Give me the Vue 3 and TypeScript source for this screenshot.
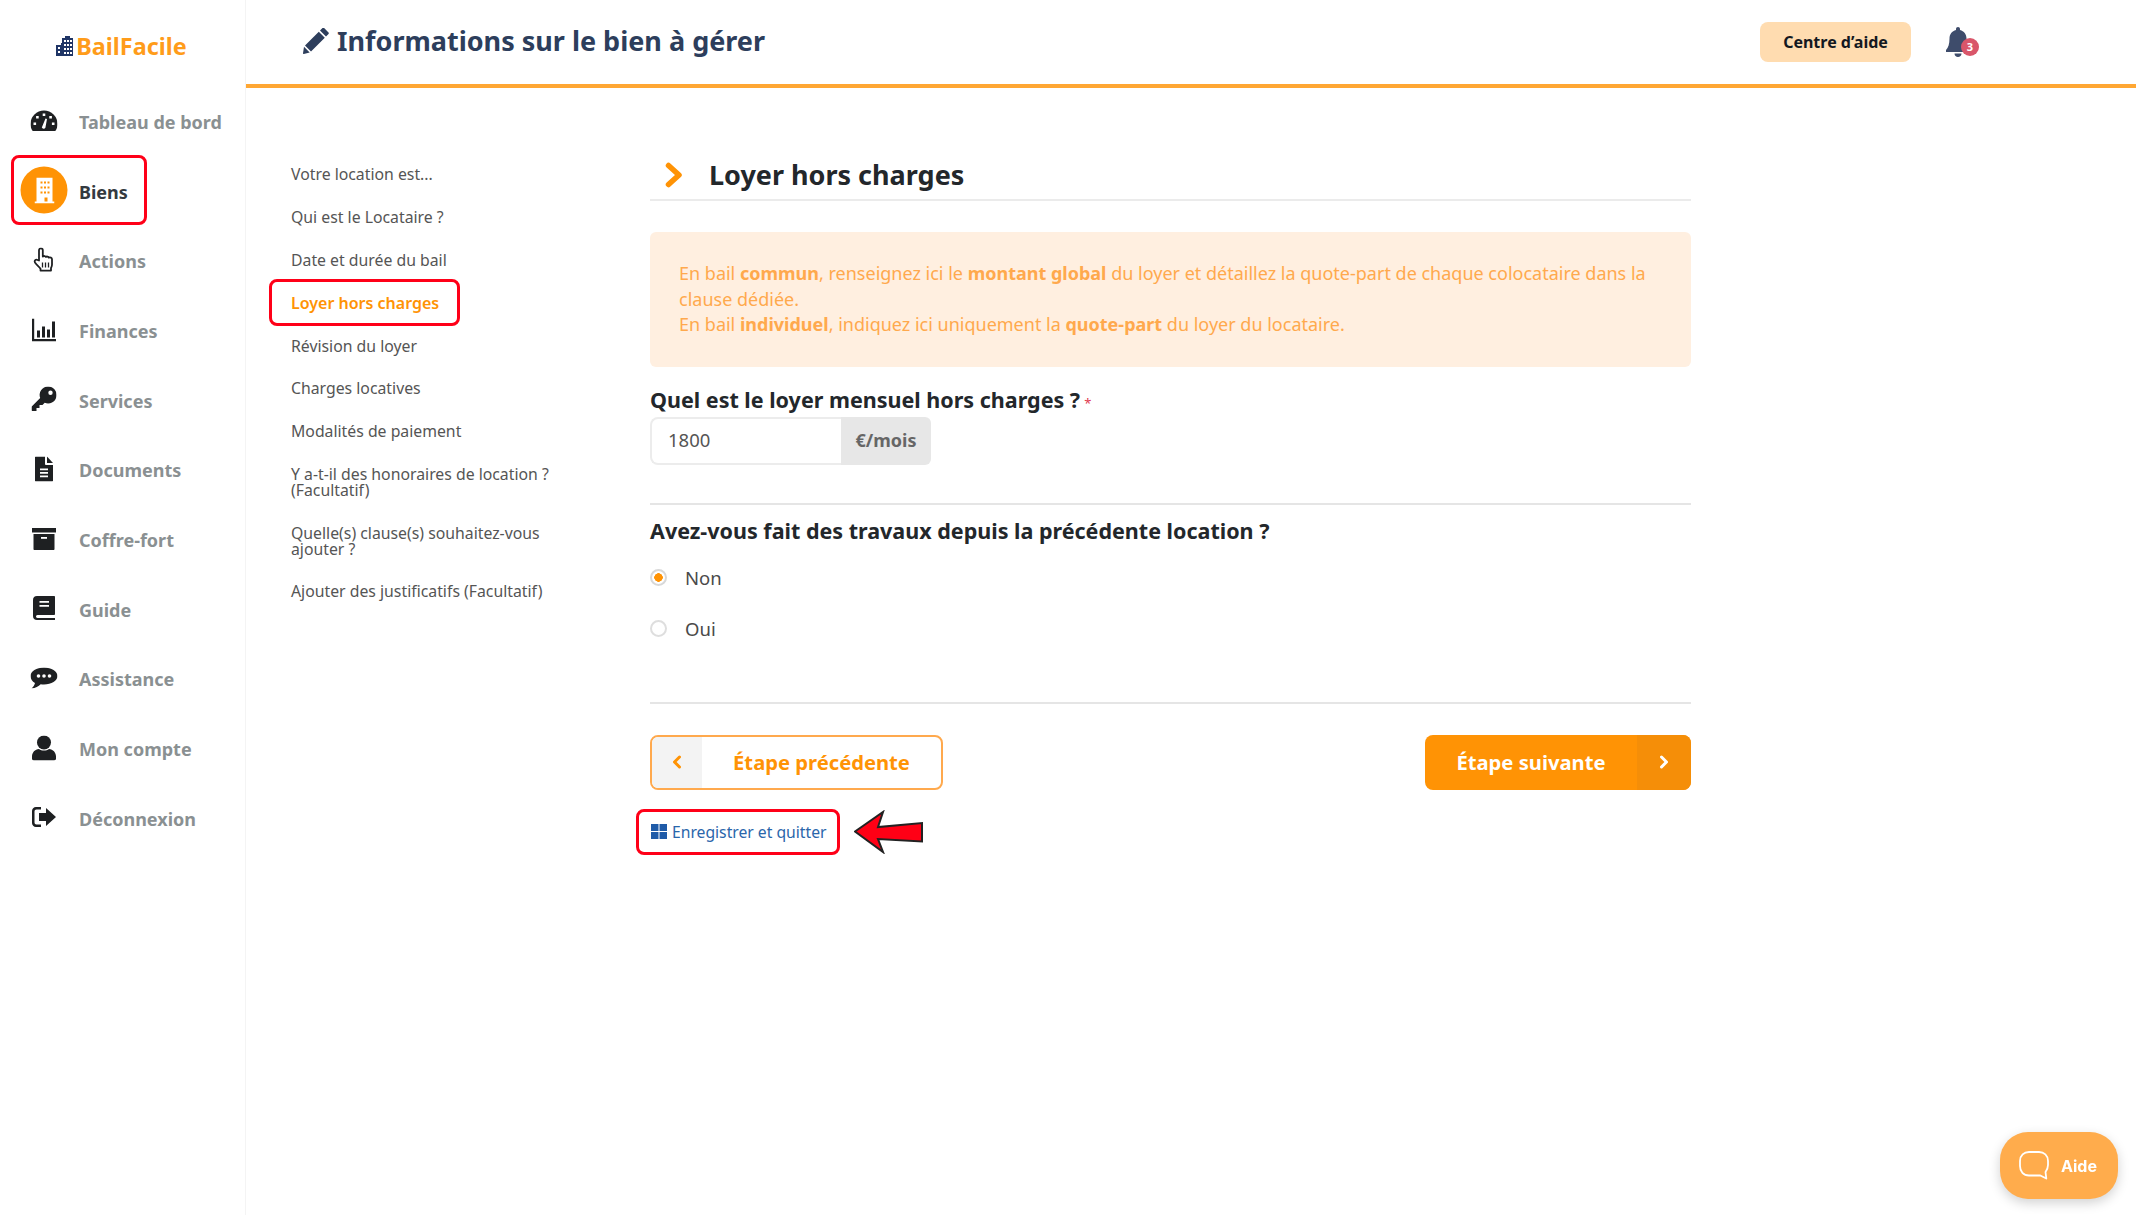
<script setup lang="ts">
import { ref } from 'vue'

const menu = [
  { key: 'gauge', label: 'Tableau de bord' },
  { key: 'building', label: 'Biens' },
  { key: 'hand', label: 'Actions' },
  { key: 'chart', label: 'Finances' },
  { key: 'tool', label: 'Services' },
  { key: 'file', label: 'Documents' },
  { key: 'archive', label: 'Coffre-fort' },
  { key: 'book', label: 'Guide' },
  { key: 'chat', label: 'Assistance' },
  { key: 'user', label: 'Mon compte' },
  { key: 'logout', label: 'Déconnexion' },
]

const steps = [
  'Votre location est...',
  'Qui est le Locataire ?',
  'Date et durée du bail',
  'Loyer hors charges',
  'Révision du loyer',
  'Charges locatives',
  'Modalités de paiement',
  'Y a-t-il des honoraires de location ? (Facultatif)',
  'Quelle(s) clause(s) souhaitez-vous ajouter ?',
  'Ajouter des justificatifs (Facultatif)',
]

const activeStep = 'Loyer hors charges'
const rent = ref('1800')
const works = ref('non')
</script>

<template>
  <div class="page">
    <aside class="sidebar">
      <div class="logo">
        <svg class="logo__icon" viewBox="0 0 17 20">
          <path fill="#1f3566" d="M0 9h5V7h1V2h3V0h5v2h3v18H0z" />
          <path
            fill="#fff"
            d="M8 4h2v2H8zM11 4h2v2h-2zM14 4h2v2h-2zM8 8h2v2H8zM11 8h2v2h-2zM14 8h2v2h-2zM2 11h2v2H2zM8 12h2v2H8zM11 12h2v2h-2zM14 12h2v2h-2zM2 15h2v2H2zM8 16h2v2H8zM11 16h2v2h-2zM14 16h2v2h-2z"
          />
        </svg>
        <span>BailFacile</span>
      </div>
      <nav class="menu">
        <a
          v-for="item in menu"
          :key="item.key"
          class="menu__item"
          :class="{ 'menu__item--active': item.key === 'building' }"
        >
          <span class="menu__icon">
            <svg v-if="item.key === 'gauge'" width="27" height="22" viewBox="0 0 27 22">
              <path fill="#1e2022" d="M0 15a13.5 13.5 0 0 1 27 0c0 2.500-.6 4.700-1.800 6.500-.3.400-.7.500-1.200.500H3c-.5 0-.9-.1-1.200-.5C.6 19.700 0 17.500 0 15z" />
              <path fill="#fff" d="M12.200 4.500h2.600v2.600h-2.600zM5.600 7h2.600v2.600H5.600zM18.800 7h2.600v2.600h-2.600zM3 13.500h2.600v2.600H3zM21.400 13.500H24v2.600h-2.600zM11.300 18.500l3.700-9 1.500.5-1.600 8.800a2.100 2.100 0 0 1-3.600-.3z" />
            </svg>
            <span v-else-if="item.key === 'building'" class="menu__badge">
              <svg width="20" height="26" viewBox="0 0 20 26">
                <path fill="#fff" d="M2 0h16v24h2v2H0v-2h2z" />
                <path fill="#ff9305" d="M6 4h2v2H6zM9.500 4h2v2h-2zM13 4h2v2h-2zM6 9h2v2H6zM9.500 9h2v2h-2zM13 9h2v2h-2zM6 14h2v2H6zM9.500 14h2v2h-2zM13 14h2v2h-2zM10 20h3v4h-3z" />
              </svg>
            </span>
            <svg v-else-if="item.key === 'hand'" width="22" height="25" viewBox="0 0 22 25">
              <path fill="none" stroke="#1e2022" stroke-width="1.800" stroke-linejoin="round" d="M6 13V2.800a1.900 1.900 0 0 1 3.800 0V9c1-.8 2.600-.6 3 .4 1-.7 2.600-.4 3 .7 1.300-.6 3.200 0 3.200 1.700v5.500c0 1.300-.5 2.200-1 3.200v2.600H7.500v-1.800C6 19 3.500 17.500 2 15c-1-1.800.8-3.700 2.500-2.500z" />
              <path fill="none" stroke="#1e2022" stroke-width="1.300" d="M9.500 15v5M12.500 15v5M15.500 15v5" />
            </svg>
            <svg v-else-if="item.key === 'chart'" width="24" height="23" viewBox="0 0 24 23">
              <path fill="#1e2022" d="M0 0h2.200v20.500H24V23H0zM5 12h3v7H5zM10 8h3v11h-3zM15 11h3v8h-3zM20 3h3v16h-3z" />
            </svg>
            <svg v-else-if="item.key === 'tool'" width="25" height="25" viewBox="0 0 25 25">
              <path fill="#1e2022" fill-rule="evenodd" d="M16.500 0a8.500 8.500 0 1 1-3.300 16.300L11 18.500H8v3H5v3H.800c-.5 0-.8-.3-.8-.8v-3.400l8.700-8.700A8.500 8.500 0 0 1 16.500 0zm2.500 4a2.200 2.200 0 1 0 0 4.400A2.200 2.200 0 0 0 19 4z" />
            </svg>
            <svg v-else-if="item.key === 'file'" width="18" height="25" viewBox="0 0 18 25">
              <path fill="#1e2022" d="M1 0h9v7.500c0 .5.500 1 1 1h7V24c0 .6-.4 1-1 1H1c-.6 0-1-.4-1-1V1c0-.6.4-1 1-1z" />
              <path fill="#1e2022" d="M12 0l6 6.500h-6z" />
              <path fill="#fff" d="M5 12h8v1.700H5zM5 15.500h8v1.700H5zM5 19h8v1.700H5z" />
            </svg>
            <svg v-else-if="item.key === 'archive'" width="24" height="22" viewBox="0 0 24 22">
              <path fill="#1e2022" d="M0 0h24v4.500H0zM1.500 6h21v15c0 .6-.4 1-1 1h-19c-.6 0-1-.4-1-1z" />
              <path fill="#fff" d="M9 9h6v1.800H9z" />
            </svg>
            <svg v-else-if="item.key === 'book'" width="22" height="24" viewBox="0 0 22 24">
              <path fill="#1e2022" d="M4 0h17c.6 0 1 .4 1 1v17c0 .5-.4 1-1 1H4.500c-2 0-2 3 0 3H22v2H4c-2.500 0-4-1.500-4-4V4c0-2.500 1.500-4 4-4z" />
              <path fill="#fff" d="M6.500 5h9.500v1.800H6.500zM6.500 9h9.500v1.800H6.500z" />
            </svg>
            <svg v-else-if="item.key === 'chat'" width="27" height="21" viewBox="0 0 27 21">
              <path fill="#1e2022" d="M13.500 0C21 0 27 3.800 27 8.500S21 17 13.500 17c-1.200 0-2.300-.1-3.300-.3C8 18.700 5 20.500 1 21c1.800-1.500 3-3.200 3.500-5.500C1.700 14 0 11.400 0 8.500 0 3.800 6 0 13.500 0z" />
              <circle fill="#fff" cx="8" cy="8.500" r="1.800" />
              <circle fill="#fff" cx="13.500" cy="8.500" r="1.800" />
              <circle fill="#fff" cx="19" cy="8.500" r="1.800" />
            </svg>
            <svg v-else-if="item.key === 'user'" width="24" height="25" viewBox="0 0 24 25">
              <circle fill="#1e2022" cx="12" cy="7" r="7" />
              <path fill="#1e2022" d="M7 13.500c1.400 1 3 1.500 5 1.500s3.600-.5 5-1.500c4 .3 7 3.500 7 7.500v2c0 1.200-.8 2-2 2H2c-1.200 0-2-.8-2-2v-2c0-4 3-7.200 7-7.500z" />
            </svg>
            <svg v-else width="24" height="20" viewBox="0 0 24 20">
              <path fill="#1e2022" d="M4 0h5v2.500H4.500C3.300 2.500 2.500 3.300 2.500 4.500v11c0 1.200.8 2 2 2H9V20H4c-2.300 0-4-1.700-4-4V4c0-2.300 1.700-4 4-4z" />
              <path fill="#1e2022" d="M14 1l10 9-10 9v-5H7V6h7z" />
            </svg>
          </span>
          <span class="menu__label">{{ item.label }}</span>
        </a>
      </nav>
    </aside>

    <div class="main">
      <header class="topbar">
        <h1 class="topbar__title">
          <svg width="26" height="26" viewBox="0 0 26 26">
            <path fill="#2d3e5c" d="M19.500 0c.5-.4 1.200-.4 1.600 0l4.400 4.400c.4.400.4 1.100 0 1.600L23 8.500 17 2.500zM15.800 3.700l6 6L8 23.500l-6-6zM1 18.800l5.700 5.700L.800 26c-.5.100-.9-.3-.8-.8z" />
          </svg>
          Informations sur le bien à gérer
        </h1>
        <div class="topbar__actions">
          <button class="help-btn">Centre d’aide</button>
          <span class="bell">
            <svg width="24" height="30" viewBox="0 0 24 30">
              <path fill="#3e4c6b" d="M12 0c1.200 0 2 .8 2 2v1c4 1 6.500 4.300 6.500 8.500 0 5.500 1.200 9 3.500 11.500v2H0v-2c2.300-2.500 3.500-6 3.500-11.500C3.500 7.300 6 4 10 3V2c0-1.200.8-2 2-2zM8.500 26.500h7C15.500 28.500 14 30 12 30s-3.500-1.500-3.500-3.500z" />
            </svg>
            <span class="bell__count">3</span>
          </span>
        </div>
      </header>

      <div class="body">
        <nav class="steps">
          <a
            v-for="step in steps"
            :key="step"
            class="steps__item"
            :class="{ 'steps__item--active': step === activeStep }"
          >
            <span class="steps__label">{{ step }}</span>
          </a>
        </nav>

        <main class="content">
          <h2 class="section-title">
            <svg width="18" height="26" viewBox="0 0 18 26">
              <path fill="none" stroke="#ff9305" stroke-width="5.500" stroke-linecap="round" stroke-linejoin="round" d="M3.500 3.500L14 13 3.500 22.500" />
            </svg>
            Loyer hors charges
          </h2>

          <div class="notice">
            En bail <b>commun</b>, renseignez ici le <b>montant global</b> du loyer et détaillez la quote-part de chaque colocataire dans la clause dédiée.<br>
            En bail <b>individuel</b>, indiquez ici uniquement la <b>quote-part</b> du loyer du locataire.
          </div>

          <label class="field-label">Quel est le loyer mensuel hors charges ?<span class="required">*</span></label>
          <div class="input-group">
            <input v-model="rent" class="input-group__field" type="text">
            <span class="input-group__addon">€/mois</span>
          </div>

          <hr class="rule rule--first">

          <h3 class="question">Avez-vous fait des travaux depuis la précédente location ?</h3>
          <div class="radios">
            <label class="radio">
              <span class="radio__dot" :class="{ 'radio__dot--on': works === 'non' }" />
              <input v-model="works" type="radio" value="non">
              Non
            </label>
            <label class="radio">
              <span class="radio__dot" :class="{ 'radio__dot--on': works === 'oui' }" />
              <input v-model="works" type="radio" value="oui">
              Oui
            </label>
          </div>

          <hr class="rule rule--second">

          <div class="actions">
            <button class="btn btn--prev">
              <span class="btn__side">
                <svg width="10" height="14" viewBox="0 0 10 14">
                  <path fill="none" stroke="#ff9305" stroke-width="3" stroke-linecap="round" stroke-linejoin="round" d="M7.500 2L2.500 7l5 5" />
                </svg>
              </span>
              <span class="btn__text">Étape précédente</span>
            </button>
            <button class="btn btn--next">
              <span class="btn__text">Étape suivante</span>
              <span class="btn__side">
                <svg width="10" height="14" viewBox="0 0 10 14">
                  <path fill="none" stroke="#fff" stroke-width="3" stroke-linecap="round" stroke-linejoin="round" d="M2.500 2l5 5-5 5" />
                </svg>
              </span>
            </button>
          </div>

          <div class="save-row">
            <a class="save-link">
              <svg width="16" height="15" viewBox="0 0 16 15">
                <path fill="#1f5ba8" d="M0 0h7.500v7H0zM8.500 0H16v7H8.500zM0 8h7.500v7H0zM8.500 8H16v7H8.500z" />
              </svg>
              Enregistrer et quitter
            </a>
            <svg class="save-arrow" width="70" height="44" viewBox="0 0 70 44">
              <path fill="#ff0015" stroke="#222" stroke-width="2" d="M1 21.500L29 2l-5 15 44-4v18.500L24 29l5 13z" />
            </svg>
          </div>
        </main>
      </div>
    </div>

    <button class="aide">
      <svg width="30" height="29" viewBox="0 0 30 29">
        <path fill="none" stroke="#fff" stroke-width="1.800" stroke-linejoin="round" d="M10 1h10c5 0 9 3.500 9 9v4c0 3-1 5-2.500 7l.800 6.500-6-3H10c-5.500 0-9-4-9-9.500V10c0-5.500 4-9 9-9z" />
      </svg>
      <span>Aide</span>
    </button>
  </div>
</template>

<style>
html,
body {
  margin: 0;
  background: #fff;
}
</style>

<style scoped>
.page {
  display: flex;
  min-height: 1215px;
  font-family: "Noto Sans", sans-serif;
  color: #333;
}

.sidebar {
  flex: 0 0 245px;
  border-right: 1px solid #f4f4f4;
}

.logo {
  display: flex;
  align-items: center;
  justify-content: center;
  gap: 3px;
  height: 87px;
  padding-top: 5px;
  padding-right: 2px;
  box-sizing: border-box;
  font-size: 23.400px;
  font-weight: 700;
  color: #ff9c1a;
}

.logo__icon {
  width: 17px;
  height: 20px;
}

.menu__item {
  position: relative;
  display: flex;
  align-items: center;
  height: 69.700px;
  padding-left: 79px;
  font-size: 18px;
  font-weight: 700;
  color: #8a9092;
}

.menu__icon {
  position: absolute;
  left: 44px;
  top: 48%;
  display: flex;
  transform: translate(-50%, -50%);
}

.menu__item--active {
  color: #333a40;
}

.menu__item--active::after {
  content: "";
  position: absolute;
  left: 11px;
  top: -2px;
  width: 136px;
  height: 70px;
  box-sizing: border-box;
  border: 3px solid #ff0018;
  border-radius: 8px;
}

.menu__badge {
  display: flex;
  align-items: center;
  justify-content: center;
  width: 47px;
  height: 47px;
  border-radius: 50%;
  background: #ff9305;
}

.main {
  flex: 1;
  min-width: 0;
}

.topbar {
  display: flex;
  align-items: center;
  justify-content: space-between;
  height: 84px;
  padding: 0 166px 0 57px;
  border-bottom: 4px solid #ffa733;
}

.topbar__title {
  display: flex;
  align-items: center;
  gap: 8px;
  margin: 0 0 3px;
  font-size: 27px;
  font-weight: 700;
  color: #2d3e5c;
}

.topbar__actions {
  display: flex;
  align-items: center;
  gap: 35px;
}

.help-btn {
  width: 151px;
  height: 40px;
  border: 0;
  border-radius: 8px;
  background: #ffdcb0;
  font: 700 16px "Noto Sans", sans-serif;
  color: #14181f;
}

.bell {
  position: relative;
  display: flex;
}

.bell__count {
  position: absolute;
  left: 15px;
  top: 11px;
  width: 18px;
  height: 18px;
  border-radius: 50%;
  background: #d9566a;
  color: #fff;
  font-size: 11px;
  font-weight: 700;
  line-height: 18px;
  text-align: center;
}

.body {
  display: flex;
  padding-top: 65px;
}

.steps {
  flex: 0 0 404px;
  box-sizing: border-box;
  padding-left: 45px;
}

.steps__item {
  display: block;
  width: 265px;
  padding: 13.400px 0;
  font-size: 15.800px;
  line-height: 16px;
  color: #555;
}

.steps__item--active {
  font-size: 16px;
  font-weight: 600;
  color: #ff9305;
}

.steps__label {
  position: relative;
  display: inline-block;
}

.steps__item--active .steps__label::after {
  content: "";
  position: absolute;
  left: -22px;
  right: -21px;
  top: -16px;
  bottom: -15px;
  border: 3px solid #ff0018;
  border-radius: 8px;
}

.content {
  flex: 0 0 1041px;
}

.section-title {
  display: flex;
  align-items: center;
  gap: 26px;
  height: 48px;
  box-sizing: border-box;
  margin: 0;
  padding: 0 0 3px 15px;
  border-bottom: 2px solid #ebebeb;
  font-size: 27px;
  font-weight: 700;
  color: #23272b;
}

.notice {
  margin-top: 31px;
  padding: 29px 29px;
  border-radius: 6px;
  background: #ffefe0;
  font-size: 18px;
  line-height: 25.500px;
  color: #ffa94d;
}

.notice b {
  font-weight: 700;
}

.field-label {
  display: block;
  height: 28px;
  margin-top: 19px;
  font-size: 21.500px;
  font-weight: 700;
  line-height: 28px;
  color: #23272b;
}

.required {
  margin-left: 4px;
  font-size: 13px;
  font-weight: 400;
  color: #e0374f;
}

.input-group {
  display: flex;
  width: 281px;
  height: 48px;
  margin-top: 3px;
}

.input-group__field {
  flex: 0 0 191px;
  width: 191px;
  box-sizing: border-box;
  padding: 0 0 2px 16px;
  border: 2px solid #ececec;
  border-right: 0;
  border-radius: 8px 0 0 8px;
  outline: none;
  font: 18.500px "Noto Sans", sans-serif;
  color: #555;
}

.input-group__addon {
  flex: 1;
  display: flex;
  align-items: center;
  justify-content: center;
  padding-bottom: 2px;
  border-radius: 0 6px 6px 0;
  background: #e7e7e7;
  font-size: 18px;
  font-weight: 700;
  color: #666;
}

.rule {
  height: 2px;
  margin: 0;
  border: 0;
  background: #e5e5e5;
}

.rule--first {
  margin-top: 38px;
}

.rule--second {
  margin-top: 48px;
}

.question {
  margin: 11px 0 0;
  font-size: 21.500px;
  font-weight: 700;
  line-height: 30px;
  color: #23272b;
}

.radios {
  margin-top: 6px;
}

.radio {
  display: flex;
  align-items: center;
  gap: 18px;
  height: 51px;
  font-size: 18.500px;
  color: #4a4a4a;
}

.radio input {
  display: none;
}

.radio__dot {
  width: 17px;
  height: 17px;
  box-sizing: border-box;
  border: 2px solid #dedede;
  border-radius: 50%;
  background: #fff;
}

.radio__dot--on {
  border-color: #d8d8d8;
  background: radial-gradient(circle, #ff9305 0 4px, #fff 4.500px);
}

.actions {
  display: flex;
  justify-content: space-between;
  margin-top: 31px;
}

.btn {
  display: flex;
  align-items: stretch;
  height: 55px;
  padding: 0;
  overflow: hidden;
  border-radius: 8px;
  font: 700 20.200px "Noto Sans", sans-serif;
}

.btn__side {
  display: flex;
  align-items: center;
  justify-content: center;
  width: 52px;
}

.btn__text {
  flex: 1;
  display: flex;
  align-items: center;
  justify-content: center;
}

.btn--prev {
  width: 293px;
  border: 2px solid #ffa94d;
  background: #fff;
  color: #ff9305;
}

.btn--prev .btn__side {
  width: 50px;
  background: #f3f3f3;
}

.btn--next {
  width: 266px;
  border: 0;
  background: #ff9305;
  color: #fff;
}

.btn--next .btn__side {
  width: 54px;
  background: #f58e08;
}

.save-row {
  display: flex;
  align-items: center;
  gap: 14px;
  margin: 19px 0 0 -14px;
}

.save-link {
  display: flex;
  align-items: center;
  gap: 5px;
  width: 204px;
  height: 46px;
  box-sizing: border-box;
  padding-left: 12px;
  border: 3px solid #ff0018;
  border-radius: 8px;
  font-size: 15.700px;
  color: #2a66ab;
}

.aide {
  position: fixed;
  right: 18px;
  bottom: 16px;
  display: flex;
  align-items: center;
  gap: 12px;
  width: 118px;
  height: 67px;
  padding: 0 0 0 19px;
  border: 0;
  border-radius: 28px;
  background: #ffac4c;
  box-shadow: 0 4px 12px rgba(0, 0, 0, 0.18);
  font: 700 16px Inter, sans-serif;
  color: #fff;
}
</style>
